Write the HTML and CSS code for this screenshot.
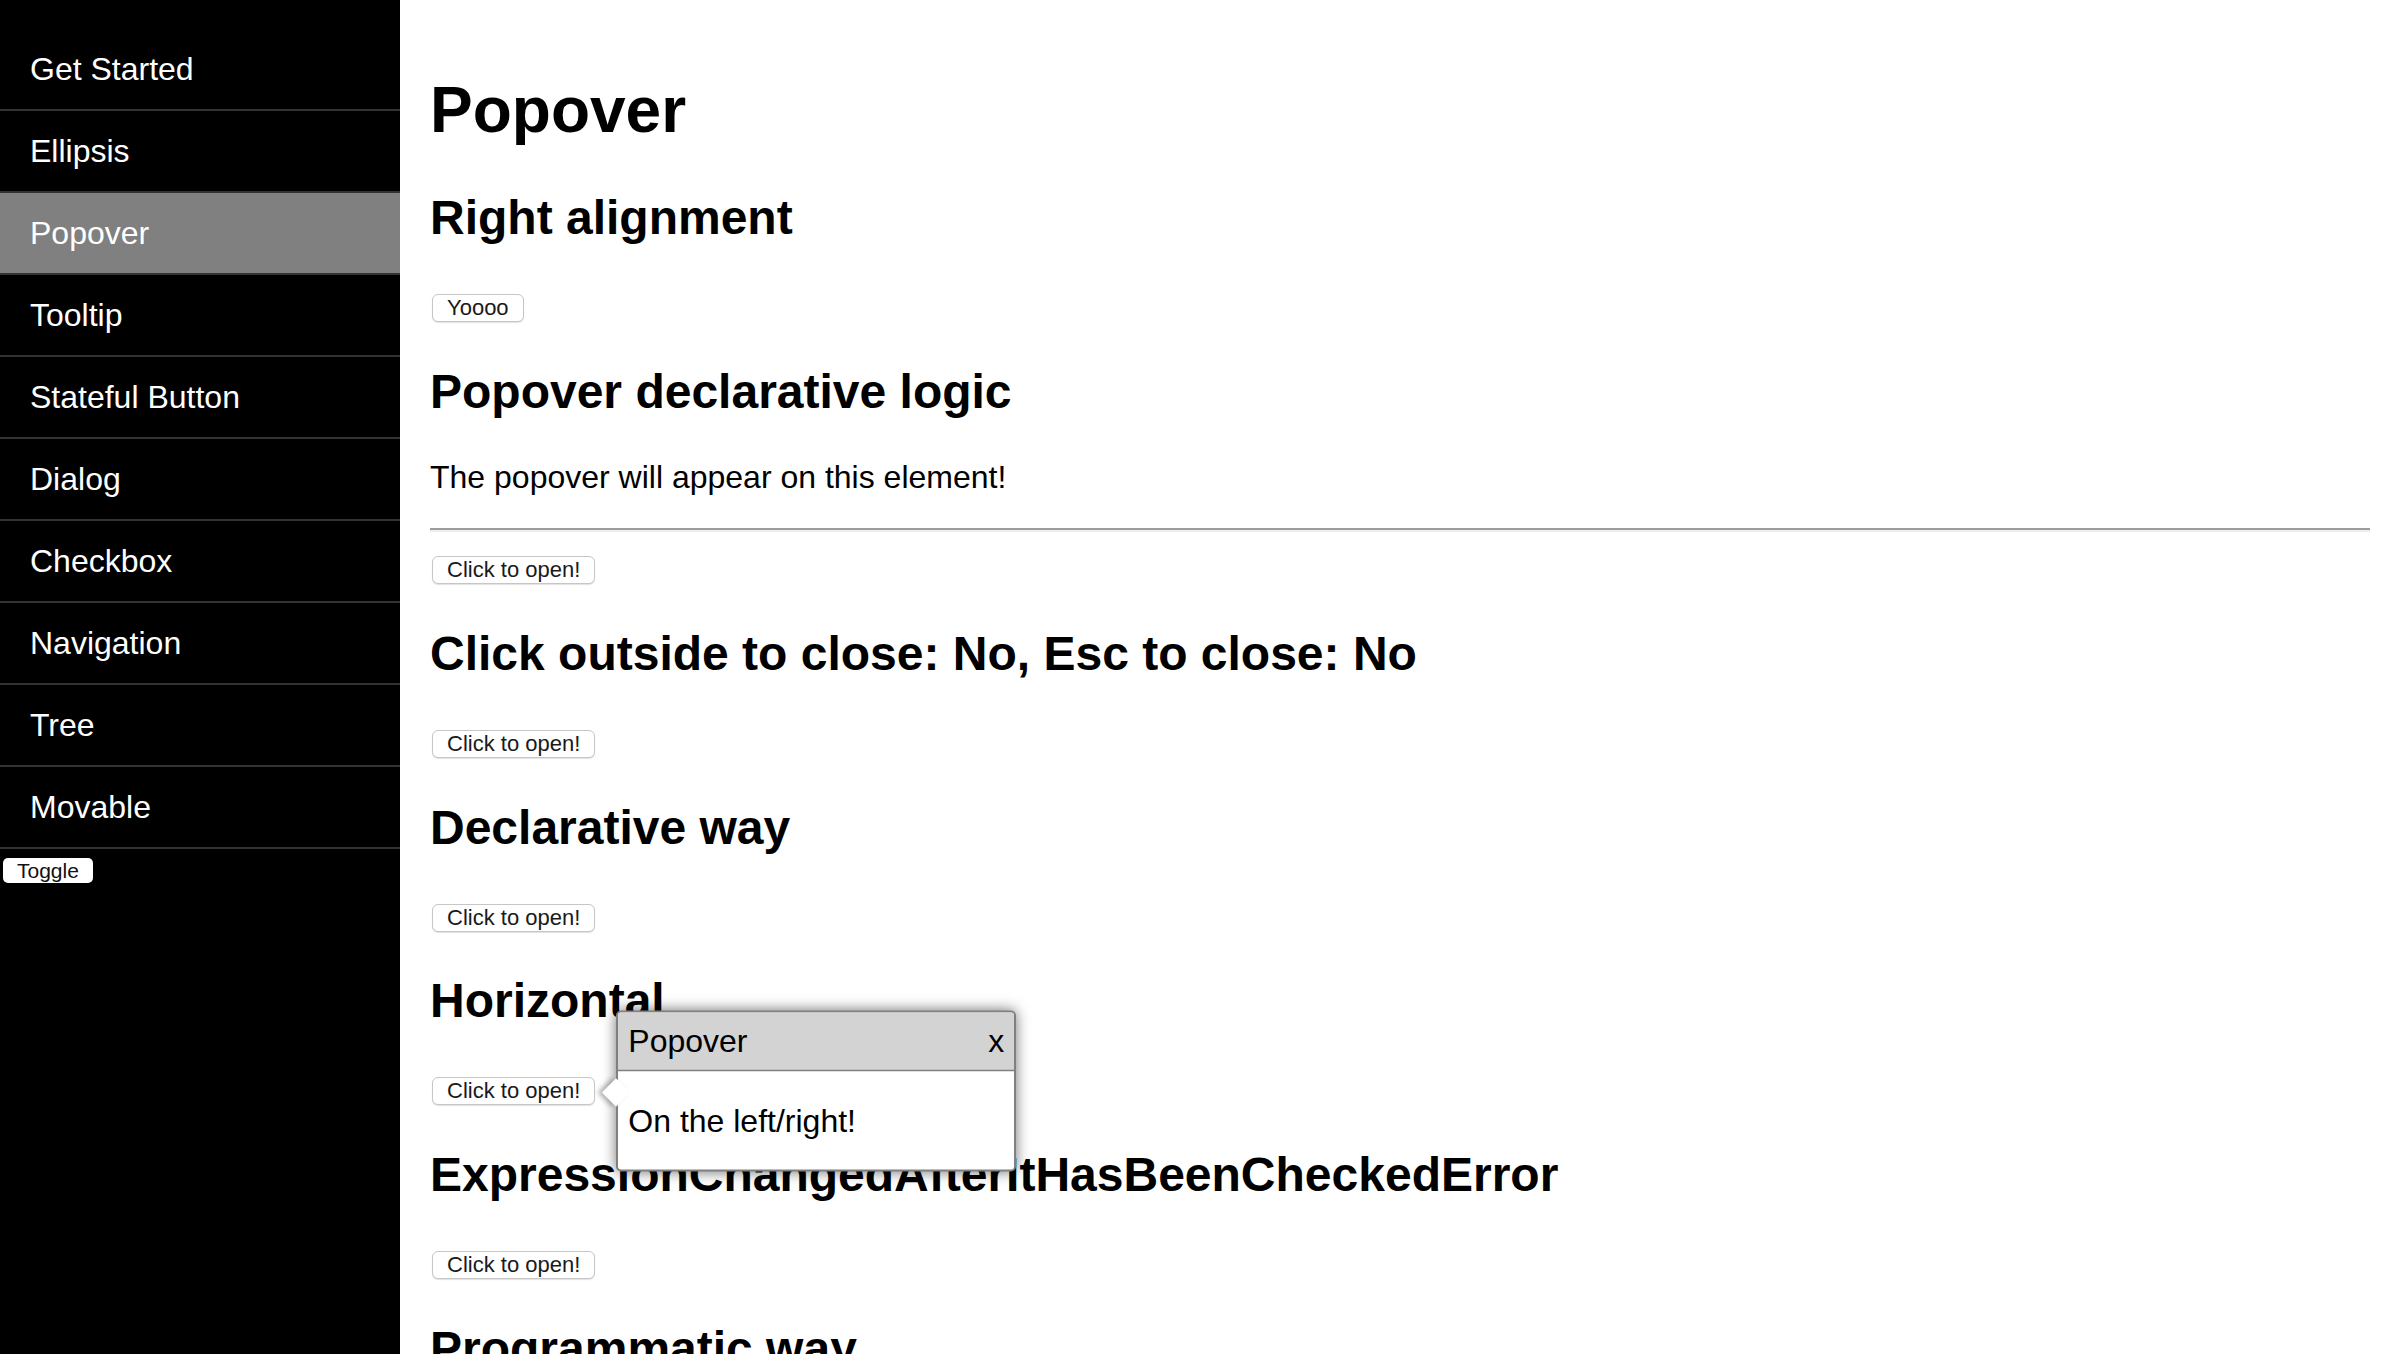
FILE: index.html
```html
<!DOCTYPE html>
<html lang="en">
<head>
<meta charset="utf-8">
<title>Popover</title>
<link rel="stylesheet" href="styles.css">
</head>
<body>
<div class="app">
  <nav class="sidebar">
    <ul class="menu">
      <li class="menu-item">Get Started</li>
      <li class="menu-item">Ellipsis</li>
      <li class="menu-item is-active">Popover</li>
      <li class="menu-item">Tooltip</li>
      <li class="menu-item">Stateful Button</li>
      <li class="menu-item">Dialog</li>
      <li class="menu-item">Checkbox</li>
      <li class="menu-item">Navigation</li>
      <li class="menu-item">Tree</li>
      <li class="menu-item">Movable</li>
    </ul>
    <button class="toggle">Toggle</button>
  </nav>
  <main class="main">
    <h1 class="title">Popover</h1>

    <h2 class="section-title">Right alignment</h2>
    <div class="row"><button class="btn">Yoooo</button></div>

    <h2 class="section-title">Popover declarative logic</h2>
    <p class="text">The popover will appear on this element!</p>
    <hr class="rule">
    <div class="row"><button class="btn">Click to open!</button></div>

    <h2 class="section-title">Click outside to close: No, Esc to close: No</h2>
    <div class="row"><button class="btn">Click to open!</button></div>

    <h2 class="section-title">Declarative way</h2>
    <div class="row"><button class="btn">Click to open!</button></div>

    <h2 class="section-title">Horizontal</h2>
    <div class="row">
      <span class="anchor">
        <button class="btn">Click to open!</button>
        <div class="popover">
          <div class="popover-header">
            <span>Popover</span>
            <span class="popover-close">x</span>
          </div>
          <div class="popover-body">On the left/right!</div>
          <div class="popover-arrow"></div>
        </div>
      </span>
    </div>

    <h2 class="section-title">ExpressionChangedAfterItHasBeenCheckedError</h2>
    <div class="row"><button class="btn">Click to open!</button></div>

    <h2 class="section-title">Programmatic way</h2>
    <div class="row"><button class="btn">Open</button> <button class="btn">Close</button></div>
  </main>
</div>
</body>
</html>
```

FILE: styles.css
```css
html, body {
  margin: 0;
  padding: 0;
}

body {
  font-family: "Liberation Sans", Arial, Helvetica, sans-serif;
  font-size: 32px;
  color: #000;
  background: #fff;
}

.app {
  display: flex;
  min-height: 100vh;
}

/* Sidebar */
.sidebar {
  width: 400px;
  flex-shrink: 0;
  background: #000;
  padding-top: 29px;
  box-sizing: border-box;
}

.menu {
  list-style: none;
  margin: 0;
  padding: 0;
}

.menu-item {
  height: 80px;
  display: flex;
  align-items: center;
  padding-left: 30px;
  color: #fff;
  font-size: 32px;
  border-bottom: 2px solid #333;
}

.menu-item.is-active {
  background: #808080;
}

.toggle {
  display: block;
  margin: 9px 0 0 3px;
  padding: 1px 14px;
  border: 0;
  border-radius: 5px;
  background: #fff;
  color: #111;
  font-family: "Liberation Sans", Arial, Helvetica, sans-serif;
  font-size: 21px;
  line-height: 23px;
}

/* Main */
.main {
  flex: 1;
  min-width: 0;
  padding: 30px 30px 0 30px;
}

.title {
  font-size: 64px;
  font-weight: bold;
  margin: 43px 0;
}

.section-title {
  font-size: 48px;
  font-weight: bold;
  margin: 40.8px 0;
}

.text {
  font-size: 32px;
  margin: 32px 0;
}

.rule {
  height: 0;
  margin: 16px 0;
  border: 0;
  border-top: 2px solid #9c9c9c;
  border-bottom: 2px solid #eeeeee;
}

.row {
  font-size: 32px;
}

.btn {
  margin: 0 0 0 2px;
  padding: 1px 14px;
  border: 1px solid #c6c6c6;
  border-radius: 6px;
  background: #fff;
  color: #1a1a1a;
  box-shadow: 0 1px 1px rgba(0, 0, 0, 0.12);
  font-family: "Liberation Sans", Arial, Helvetica, sans-serif;
  font-size: 22px;
  line-height: 24px;
}

/* Popover */
.anchor {
  position: relative;
  display: inline-flex;
}

.popover {
  position: absolute;
  left: calc(100% + 21px);
  top: 50%;
  transform: translateY(-50%);
  z-index: 10;
  width: 400px;
  box-sizing: border-box;
  background: #fff;
  border: 2px solid #808080;
  border-radius: 5px;
  box-shadow: 0 0 14px rgba(0, 0, 0, 0.55);
  font-size: 32px;
}

.popover-header {
  display: flex;
  justify-content: space-between;
  align-items: center;
  padding: 10px 10px 10px;
  background: #d3d3d3;
  border-bottom: 2px solid #808080;
  border-radius: 3px 3px 0 0;
}

.popover-body {
  padding: 31px 10px 30px;
}

.popover-arrow {
  position: absolute;
  left: -12px;
  top: 50%;
  width: 20px;
  height: 20px;
  margin-top: -9px;
  background: #fff;
  transform: rotate(45deg);
  box-shadow: -3px 3px 5px rgba(0, 0, 0, 0.3);
}
```
